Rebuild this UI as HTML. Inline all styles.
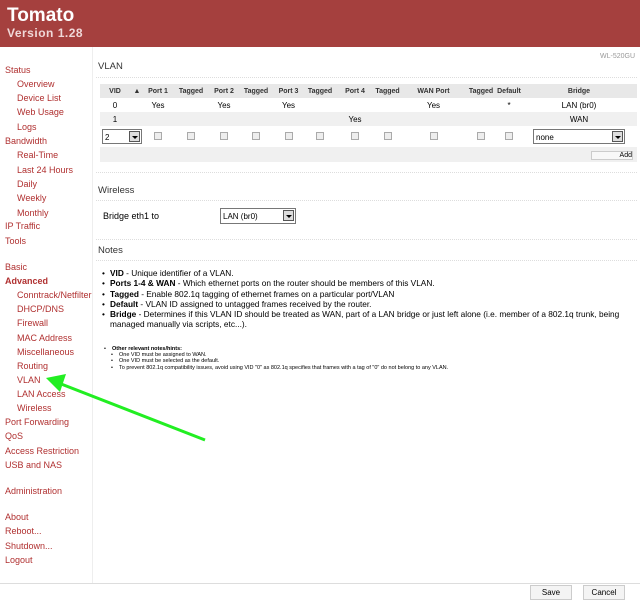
<!DOCTYPE html>
<html><head><meta charset="utf-8"><style>
*{margin:0;padding:0;box-sizing:border-box}
body{width:640px;height:606px;overflow:hidden;background:#fff;font-family:"Liberation Sans",Arial,sans-serif;position:relative;font-size:9px;color:#000}
#hdr{position:absolute;left:0;top:0;width:640px;height:47px;background:#a5403e}
#hdr .t{position:absolute;left:7px;top:5px;font-size:19px;font-weight:bold;color:#fff}
#hdr .v{position:absolute;left:7px;top:26px;font-size:12px;font-weight:bold;color:#f0d8d8;letter-spacing:.5px}
#side{position:absolute;left:0;top:47px;width:93px;height:536px;border-right:1px solid #eee}
.n{position:absolute;font-size:9px;color:#b03030;white-space:nowrap}
.s{left:5px}.i{left:17px}
.ab{position:absolute;font-size:9px;white-space:nowrap}
h3{position:absolute;font-size:9.5px;font-weight:normal;color:#333}
.line{position:absolute;left:96px;width:541px;border-top:1px dotted #ddd}
table{position:absolute;left:100px;top:84px;width:537px;border-collapse:collapse;font-size:8px;table-layout:fixed}
td{height:14px;text-align:center;padding:0}
tr.h td{background:#e8e8e8;font-weight:bold;font-size:7px;color:#333}
tr.g td{background:#f0f0f0}
.cb{display:inline-block;width:8px;height:8px;border:1px solid #aaa;background:#eee}
.sel{display:inline-block;border:1px solid #777;height:15px;background:#fff;position:relative;text-align:left;font-size:8px;padding:3px 2px}
.sel b{position:absolute;right:1px;top:1px;width:11px;height:11px;border:1px solid #555;background:#ddd}
.sel b:after{content:"";position:absolute;left:2px;top:4px;border-left:3px solid transparent;border-right:3px solid transparent;border-top:3px solid #000}
.btn{position:absolute;border:1px solid #ccc;background:#f4f4f4;font-size:8px;text-align:center}
ul{position:absolute;list-style:none}
ul li{position:relative;padding-left:8px}
ul li:before{content:"•";position:absolute;left:0}
</style></head><body>
<div id="hdr"><div class="t">Tomato</div><div class="v">Version 1.28</div></div>
<div style="position:absolute;right:5px;top:53px;font-size:7px;color:#999">WL-520GU</div>
<div id="side"></div>
<div class="n s" style="top:65px">Status</div>
<div class="n i" style="top:79px">Overview</div>
<div class="n i" style="top:93px">Device List</div>
<div class="n i" style="top:107px">Web Usage</div>
<div class="n i" style="top:122px">Logs</div>
<div class="n s" style="top:136px">Bandwidth</div>
<div class="n i" style="top:150px">Real-Time</div>
<div class="n i" style="top:165px">Last 24 Hours</div>
<div class="n i" style="top:179px">Daily</div>
<div class="n i" style="top:193px">Weekly</div>
<div class="n i" style="top:208px">Monthly</div>
<div class="n s" style="top:221px">IP Traffic</div>
<div class="n s" style="top:236px">Tools</div>
<div class="n s" style="top:262px">Basic</div>
<div class="n s" style="top:276px;font-weight:bold">Advanced</div>
<div class="n i" style="top:290px">Conntrack/Netfilter</div>
<div class="n i" style="top:304px">DHCP/DNS</div>
<div class="n i" style="top:318px">Firewall</div>
<div class="n i" style="top:333px">MAC Address</div>
<div class="n i" style="top:347px">Miscellaneous</div>
<div class="n i" style="top:361px">Routing</div>
<div class="n i" style="top:375px">VLAN</div>
<div class="n i" style="top:389px">LAN Access</div>
<div class="n i" style="top:403px">Wireless</div>
<div class="n s" style="top:417px">Port Forwarding</div>
<div class="n s" style="top:431px">QoS</div>
<div class="n s" style="top:446px">Access Restriction</div>
<div class="n s" style="top:460px">USB and NAS</div>
<div class="n s" style="top:486px">Administration</div>
<div class="n s" style="top:512px">About</div>
<div class="n s" style="top:526px">Reboot...</div>
<div class="n s" style="top:541px">Shutdown...</div>
<div class="n s" style="top:555px">Logout</div>

<h3 style="left:98px;top:61px">VLAN</h3>
<div class="line" style="top:77px"></div>
<table>
<colgroup><col style="width:30px"><col style="width:14px"><col style="width:28px"><col style="width:38px"><col style="width:28px"><col style="width:36px"><col style="width:29px"><col style="width:34px"><col style="width:36px"><col style="width:29px"><col style="width:63px"><col style="width:32px"><col style="width:24px"><col></colgroup>
<tr class="h"><td>VID</td><td>▲</td><td>Port 1</td><td>Tagged</td><td>Port 2</td><td>Tagged</td><td>Port 3</td><td>Tagged</td><td>Port 4</td><td>Tagged</td><td>WAN Port</td><td>Tagged</td><td>Default</td><td>Bridge</td></tr>
<tr><td>0</td><td></td><td>Yes</td><td></td><td>Yes</td><td></td><td>Yes</td><td></td><td></td><td></td><td>Yes</td><td></td><td>*</td><td>LAN (br0)</td></tr>
<tr class="g"><td>1</td><td></td><td></td><td></td><td></td><td></td><td></td><td></td><td>Yes</td><td></td><td></td><td></td><td></td><td>WAN</td></tr>
<tr style="height:21px"><td colspan="2"><span class="sel" style="width:40px">2<b></b></span></td><td><span class="cb"></span></td><td><span class="cb"></span></td><td><span class="cb"></span></td><td><span class="cb"></span></td><td><span class="cb"></span></td><td><span class="cb"></span></td><td><span class="cb"></span></td><td><span class="cb"></span></td><td><span class="cb"></span></td><td><span class="cb"></span></td><td><span class="cb"></span></td><td><span class="sel" style="width:92px">none<b></b></span></td></tr>
<tr class="g" style="height:15px"><td colspan="13"></td><td style="text-align:right;padding-right:4px"><span style="display:inline-block;border:1px solid #ccc;background:#f8f8f8;width:42px;font-size:7px">Add</span></td></tr>
</table>
<div class="line" style="top:172px"></div>
<h3 style="left:98px;top:185px">Wireless</h3>
<div class="line" style="top:200px"></div>
<div class="ab" style="left:103px;top:211px;font-size:9px">Bridge eth1 to</div>
<span class="sel" style="position:absolute;left:220px;top:208px;width:76px;height:16px">LAN (br0)<b></b></span>
<div class="line" style="top:239px"></div>
<h3 style="left:98px;top:245px">Notes</h3>
<div class="line" style="top:260px"></div>
<ul style="left:102px;top:268px;font-size:8.3px;line-height:10.3px;width:530px">
<li><b>VID</b> - Unique identifier of a VLAN.</li>
<li><b>Ports 1-4 &amp; WAN</b> - Which ethernet ports on the router should be members of this VLAN.</li>
<li><b>Tagged</b> - Enable 802.1q tagging of ethernet frames on a particular port/VLAN</li>
<li><b>Default</b> - VLAN ID assigned to untagged frames received by the router.</li>
<li><b>Bridge</b> - Determines if this VLAN ID should be treated as WAN, part of a LAN bridge or just left alone (i.e. member of a 802.1q trunk, being managed manually via scripts, etc...).</li>
</ul>
<ul style="left:104px;top:346px;font-size:5.5px;line-height:6.3px">
<li><b>Other relevant notes/hints:</b></li>
</ul>
<ul style="left:111px;top:352px;font-size:5.5px;line-height:6.3px">
<li>One VID must be assigned to WAN.</li>
<li>One VID must be selected as the default.</li>
<li>To prevent 802.1q compatibility issues, avoid using VID "0" as 802.1q specifies that frames with a tag of "0" do not belong to any VLAN.</li>
</ul>
<svg style="position:absolute;left:0;top:0" width="640" height="606"><line x1="205" y1="440" x2="56" y2="382" stroke="#22ee22" stroke-width="3"/><polygon points="46,378 66,374 60,392" fill="#22ee22"/></svg>
<div style="position:absolute;left:0;top:583px;width:640px;height:23px;border-top:1px solid #ddd;background:#fff"></div>
<div class="btn" style="left:530px;top:585px;width:42px;height:15px;line-height:13px">Save</div>
<div class="btn" style="left:583px;top:585px;width:42px;height:15px;line-height:13px">Cancel</div>
</body></html>
